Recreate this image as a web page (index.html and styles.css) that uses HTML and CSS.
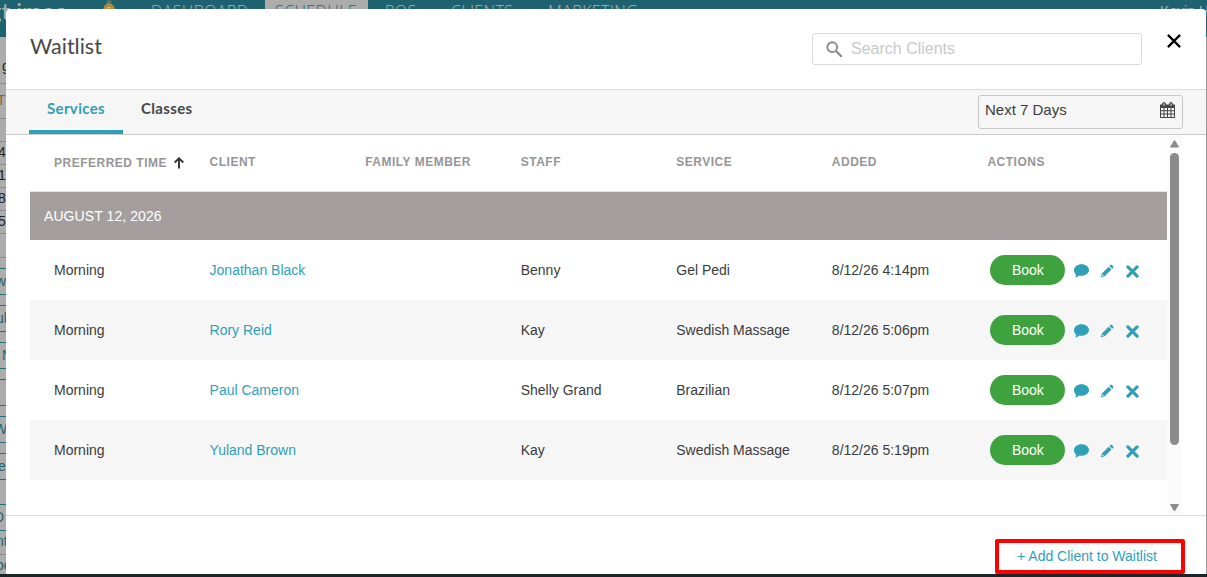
FILE: index.html
```
<!DOCTYPE html>
<html lang="en">
<head>
    <meta charset="UTF-8">
    <meta name="viewport" content="width=device-width, initial-scale=1.0">
    <title>Waitlist</title>
    <link rel="stylesheet" href="styles.css">
</head>
<body>

    <!-- Icons used in the table rows -->
    <svg class="icon-defs" width="0" height="0">
        <symbol id="icon-comment" viewBox="0 0 15 14">
            <path d="M7.5 0.2C11.6 0.2 15 2.8 15 6s-3.4 5.8-7.5 5.8c-.8 0-1.500-.1-2.200-.2C4.200 12.700 2.800 13.300 1.100 13.500c.7-.8 1.100-1.700 1.100-2.600C.8 9.600 0 7.900 0 6 0 2.800 3.400.2 7.500.2z"/>
        </symbol>
        <symbol id="icon-pencil" viewBox="0 0 14 14">
            <path fill-rule="evenodd" d="M10.300 1.100c.5-.5 1.200-.5 1.700 0l1.100 1.100c.5.5.5 1.200 0 1.700l-.9.900-2.800-2.800zM8.700 2.700l2.800 2.800-6.800 6.700-4.100 1.300 1.300-4.100zM2.500 10.400l-.7 2 2-.6z"/>
        </symbol>
        <symbol id="icon-remove" viewBox="0 0 13 13">
            <path d="M1.900 1.900l9.200 9.200M11.100 1.900l-9.200 9.200" stroke="currentColor" stroke-width="3.200" stroke-linecap="round" fill="none"/>
        </symbol>
    </svg>

    <div class="page">
        <div class="navbar">
            <div class="logo">gt imeo</div>
            <svg class="bell" width="12" height="14" viewBox="0 0 12 14">
                <circle cx="6" cy="2.500" r="1.600" fill="none" stroke="#b08a3c"/>
                <path d="M6 3C2.500 3.500 1 5.500 0 9v5h12V9C11 5.500 9.500 3.500 6 3z" fill="#b08a3c"/>
                <path d="M4.500 7.500h3M5 7.500v3" stroke="#d0c09a" fill="none"/>
            </svg>
            <div class="nav-links">
                <a class="nav-link">DASHBOARD</a>
                <a class="nav-link active">SCHEDULE</a>
                <a class="nav-link">POS</a>
                <a class="nav-link">CLIENTS</a>
                <a class="nav-link">MARKETING</a>
            </div>
            <div class="nav-user">Kevin H</div>
        </div>
        <div class="page-body">
            <div class="calendar">
                <div class="cal-row h46 in">g</div>
                <div class="cal-row h35 orange">T</div>
                <div class="cal-row">&nbsp;</div>
                <div class="cal-row digit">4</div>
                <div class="cal-row digit">1</div>
                <div class="cal-row digit">8</div>
                <div class="cal-row digit">5</div>
                <div class="cal-row h24">&nbsp;</div>
                <div class="cal-gap"></div>
                <div class="cal-event out">w</div>
                <div class="cal-gap"></div>
                <div class="cal-event out">ul</div>
                <div class="cal-gap"></div>
                <div class="cal-event in">N</div>
                <div class="cal-gap"></div>
                <div class="cal-event">&nbsp;</div>
                <div class="cal-gap"></div>
                <div class="cal-event far">W</div>
                <div class="cal-gap"></div>
                <div class="cal-event digit">e</div>
                <div class="cal-gap wide"></div>
                <div class="cal-event far">D</div>
                <div class="cal-row h24 teal out">nt</div>
                <div class="cal-row h24 teal out">oo</div>
            </div>
            <div class="calendar-edge"></div>
        </div>
    </div>

    <div class="modal">
        <div class="modal-header">
            <h1 class="modal-title">Waitlist</h1>
            <div class="search-box">
                <svg width="17" height="17" viewBox="0 0 17 17" fill="none" stroke="#8a8a8a">
                    <circle cx="6.200" cy="6.200" r="4.900" stroke-width="1.900"/>
                    <path d="M9.800 9.800l5.900 5.900" stroke-width="2.300"/>
                </svg>
                <span>Search Clients</span>
            </div>
            <svg class="close" width="14" height="14" viewBox="0 0 14 14">
                <path d="M.9.9l12.200 12.200M13.100.9L.9 13.100" stroke="#000" stroke-width="2.200" fill="none"/>
            </svg>
        </div>

        <div class="tab-bar">
            <div class="tabs">
                <div class="tab active">Services</div>
                <div class="tab">Classes</div>
            </div>
            <div class="date-select">
                <span>Next 7 Days</span>
                <svg width="15" height="16" viewBox="0 0 15 16">
                    <path d="M0 2.500h15V16H0z" fill="#444"/>
                    <path d="M1 6h2.500v2.300H1zM4.500 6h2.500v2.300H4.500zM8 6h2.500v2.300H8zM11.500 6H14v2.300h-2.500zM1 9.300h2.500v2.300H1zM4.500 9.300h2.500v2.300H4.500zM8 9.300h2.500v2.300H8zM11.500 9.300H14v2.300h-2.500zM1 12.600h2.500V15H1zM4.500 12.600h2.500V15H4.500zM8 12.600h2.500V15H8zM11.500 12.600H14V15h-2.500z" fill="#f6f6f6"/>
                    <rect x="2.500" y=".5" width="3" height="4" rx="1.400" fill="#999" stroke="#444"/>
                    <rect x="9.500" y=".5" width="3" height="4" rx="1.400" fill="#999" stroke="#444"/>
                </svg>
            </div>
        </div>

        <div class="modal-body">
            <div class="table">
                <div class="table-row table-head">
                    <div class="sorted">PREFERRED TIME
                        <svg width="10" height="12" viewBox="0 0 10 12" fill="none" stroke="#333" stroke-width="1.900">
                            <path d="M5 11.500V1.500M.7 5.500L5 1.300l4.300 4.200"/>
                        </svg>
                    </div>
                    <div>CLIENT</div>
                    <div>FAMILY MEMBER</div>
                    <div>STAFF</div>
                    <div>SERVICE</div>
                    <div>ADDED</div>
                    <div>ACTIONS</div>
                </div>
                <div class="date-row">AUGUST 12, 2026</div>
                <div class="table-row">
                    <div>Morning</div>
                    <div><a class="client">Jonathan Black</a></div>
                    <div></div>
                    <div>Benny</div>
                    <div>Gel Pedi</div>
                    <div>8/12/26 4:14pm</div>
                    <div class="actions">
                        <button class="book">Book</button>
                        <svg class="comment"><use href="#icon-comment"/></svg>
                        <svg class="pencil"><use href="#icon-pencil"/></svg>
                        <svg class="remove"><use href="#icon-remove"/></svg>
                    </div>
                </div>
                <div class="table-row striped">
                    <div>Morning</div>
                    <div><a class="client">Rory Reid</a></div>
                    <div></div>
                    <div>Kay</div>
                    <div>Swedish Massage</div>
                    <div>8/12/26 5:06pm</div>
                    <div class="actions">
                        <button class="book">Book</button>
                        <svg class="comment"><use href="#icon-comment"/></svg>
                        <svg class="pencil"><use href="#icon-pencil"/></svg>
                        <svg class="remove"><use href="#icon-remove"/></svg>
                    </div>
                </div>
                <div class="table-row">
                    <div>Morning</div>
                    <div><a class="client">Paul Cameron</a></div>
                    <div></div>
                    <div>Shelly Grand</div>
                    <div>Brazilian</div>
                    <div>8/12/26 5:07pm</div>
                    <div class="actions">
                        <button class="book">Book</button>
                        <svg class="comment"><use href="#icon-comment"/></svg>
                        <svg class="pencil"><use href="#icon-pencil"/></svg>
                        <svg class="remove"><use href="#icon-remove"/></svg>
                    </div>
                </div>
                <div class="table-row striped">
                    <div>Morning</div>
                    <div><a class="client">Yuland Brown</a></div>
                    <div></div>
                    <div>Kay</div>
                    <div>Swedish Massage</div>
                    <div>8/12/26 5:19pm</div>
                    <div class="actions">
                        <button class="book">Book</button>
                        <svg class="comment"><use href="#icon-comment"/></svg>
                        <svg class="pencil"><use href="#icon-pencil"/></svg>
                        <svg class="remove"><use href="#icon-remove"/></svg>
                    </div>
                </div>
            </div>
            <div class="scrollbar">
                <svg width="9" height="8" viewBox="0 0 9 8"><path d="M4.500.5L8.500 7h-8z" fill="#8b8b8b" stroke="#8b8b8b" stroke-linejoin="round"/></svg>
                <div class="thumb"></div>
                <svg width="9" height="8" viewBox="0 0 9 8"><path d="M4.500 7L8.500.5h-8z" fill="#8b8b8b" stroke="#8b8b8b" stroke-linejoin="round"/></svg>
            </div>
        </div>

        <div class="modal-footer">
            <a class="add-client">+ Add Client to Waitlist</a>
        </div>
    </div>

</body>
</html>
```
FILE: styles.css
```
* {
    box-sizing: border-box;
    margin: 0;
    padding: 0;
}

body {
    font-family: "Liberation Sans", Arial, sans-serif;
    font-size: 14px;
    color: #3c3c3c;
    width: 1207px;
    height: 577px;
    overflow: hidden;
    position: relative;
}

.icon-defs {
    position: absolute;
}

/* Dimmed page behind the modal */
.page {
    height: 577px;
    display: flex;
    flex-direction: column;
    background-color: #acacac;
    border-bottom: 3px solid #1c2527;
}

.navbar {
    display: flex;
    height: 37px;
    flex-shrink: 0;
    background-color: #1e626f;
    color: #a9b3b5;
    overflow: hidden;
}

.logo {
    width: 110px;
    margin-left: -11px;
    font-family: Lato, sans-serif;
    font-size: 24px;
    line-height: 22px;
    white-space: nowrap;
}

.bell {
    margin: 0 4px;
}

.nav-links {
    display: flex;
    margin-left: 16px;
    font-family: "Open Sans", sans-serif;
    font-weight: 300;
    font-size: 16px;
    line-height: 22px;
    letter-spacing: 0.4px;
}

.nav-link {
    padding: 0 17px 0 17px;
    width: 83px;
    white-space: nowrap;
}

.nav-link:first-child {
    width: 130px;
    padding-left: 16px;
}

.nav-link.active {
    width: 103px;
    padding-left: 10px;
    background-color: #acacac;
    color: #1e626f;
}

.nav-link:nth-child(4) {
    width: 97px;
    padding-left: 0;
}

.nav-link:nth-child(5) {
    padding-left: 0;
}

.nav-user {
    margin-left: auto;
    width: 47px;
    line-height: 22px;
    white-space: nowrap;
    overflow: hidden;
}

.page-body {
    display: flex;
    justify-content: space-between;
    flex: 1;
    min-height: 0;
}

.calendar {
    width: 6px;
    overflow: hidden;
}

.cal-row {
    height: 23px;
    line-height: 20px;
    border-bottom: 1px solid #8b8b8b;
    color: #222;
    white-space: nowrap;
}

.cal-row.h46 {
    height: 47px;
    line-height: 58px;
}

.cal-row.h35 {
    height: 35px;
    line-height: 32px;
}

.cal-row.h24 {
    height: 24px;
}

.cal-row.orange {
    color: #95622e;
    text-indent: -3px;
}

.cal-row.teal,
.cal-event {
    color: #24636e;
}

.cal-gap {
    height: 10px;
}

.cal-gap.wide {
    height: 24px;
}

.cal-event {
    height: 27px;
    line-height: 25px;
    border-top: 1px solid #24727f;
    border-bottom: 1px solid #24727f;
    white-space: nowrap;
}

.in {
    text-indent: 2px;
}

.out {
    text-indent: -4px;
}

.digit {
    text-indent: -2px;
}

.far {
    text-indent: -6px;
}

.calendar-edge {
    width: 1px;
    background-color: #999;
}

/* Modal */
.modal {
    position: absolute;
    top: 9px;
    left: 6px;
    width: 1200px;
    height: 565px;
    display: flex;
    flex-direction: column;
    background-color: #fff;
    border-radius: 4px 4px 0 0;
}

.modal-header {
    display: flex;
    align-items: flex-start;
    height: 81px;
    padding: 24px 25px 0 24px;
    border-bottom: 1px solid #dcdcdc;
}

.modal-title {
    font-family: Lato, sans-serif;
    font-weight: 400;
    font-size: 21.5px;
    line-height: 27px;
    color: #484848;
}

.search-box {
    display: flex;
    align-items: center;
    gap: 8px;
    width: 330px;
    height: 32px;
    margin-left: auto;
    padding-left: 13px;
    border: 1px solid #d9d9d9;
    border-radius: 3px;
    font-size: 16px;
    color: #c9c9c9;
}

.close {
    margin: 1px 0 0 25px;
}

.tab-bar {
    display: flex;
    justify-content: space-between;
    height: 45px;
    padding: 0 23px;
    background-color: #f6f6f6;
    border-bottom: 1px solid #cacaca;
}

.tabs {
    display: flex;
    font-family: Lato, sans-serif;
    font-weight: bold;
    font-size: 15px;
    line-height: 36px;
    letter-spacing: 0.35px;
}

.tab {
    padding: 0 18px;
    color: #474747;
}

.tab.active {
    width: 94px;
    height: 44px;
    color: #309fb8;
    border-bottom: 4px solid #309fb8;
}

.date-select {
    display: flex;
    justify-content: space-between;
    width: 205px;
    height: 34px;
    margin-top: 5px;
    padding: 6px 7px 0 6px;
    border: 1px solid #c8c8c8;
    border-radius: 3px;
    font-size: 15px;
    line-height: 16px;
}

.modal-body {
    display: flex;
    height: 380px;
    padding: 0 24px;
}

.table {
    width: 1137px;
}

.table-row {
    display: grid;
    grid-template-columns: repeat(7, 1fr);
    align-items: center;
    height: 60px;
    padding: 0 24px;
}

.table-head {
    height: 57px;
    padding-bottom: 3px;
    border-bottom: 1px solid #e6e6e6;
    font-size: 12px;
    font-weight: bold;
    letter-spacing: 0.5px;
    color: #969696;
}

.sorted {
    display: flex;
    align-items: center;
    gap: 7px;
    padding-top: 2px;
    white-space: nowrap;
}

.date-row {
    height: 48px;
    padding-left: 14px;
    line-height: 48px;
    letter-spacing: 0.08px;
    background-color: #a49f9e;
    color: #fff;
}

.striped {
    background-color: #f6f6f6;
}

.client,
.add-client {
    color: #309fb8;
}

.actions {
    display: flex;
    align-items: center;
    padding-left: 3px;
    color: #309fb8;
}

.actions svg {
    fill: currentColor;
    flex-shrink: 0;
}

.book {
    width: 75px;
    height: 30px;
    border: none;
    border-radius: 15px;
    background-color: #3ea33f;
    color: #fff;
    font-family: inherit;
    font-size: 14px;
}

.comment {
    width: 15px;
    height: 14px;
    margin: 2px 0 0 9px;
}

.pencil {
    width: 14px;
    height: 14px;
    margin: 2px 0 0 11px;
}

.remove {
    width: 13px;
    height: 13px;
    margin: 2px 0 0 12px;
}

.scrollbar {
    display: flex;
    flex-direction: column;
    align-items: center;
    width: 15px;
    padding: 5px 0 3px;
    background-color: #fbfbfb;
}

.thumb {
    width: 9px;
    height: 292px;
    margin: 5px 0 auto;
    border-radius: 5px;
    background-color: #8b8b8b;
}

.modal-footer {
    display: flex;
    justify-content: flex-end;
    align-items: flex-end;
    flex: 1;
    padding-right: 21px;
    border-top: 1px solid #dcdcdc;
}

.add-client {
    width: 190px;
    height: 35px;
    border: 4px solid #fe0000;
    border-radius: 2px;
    padding-left: 18px;
    line-height: 26px;
}
```
